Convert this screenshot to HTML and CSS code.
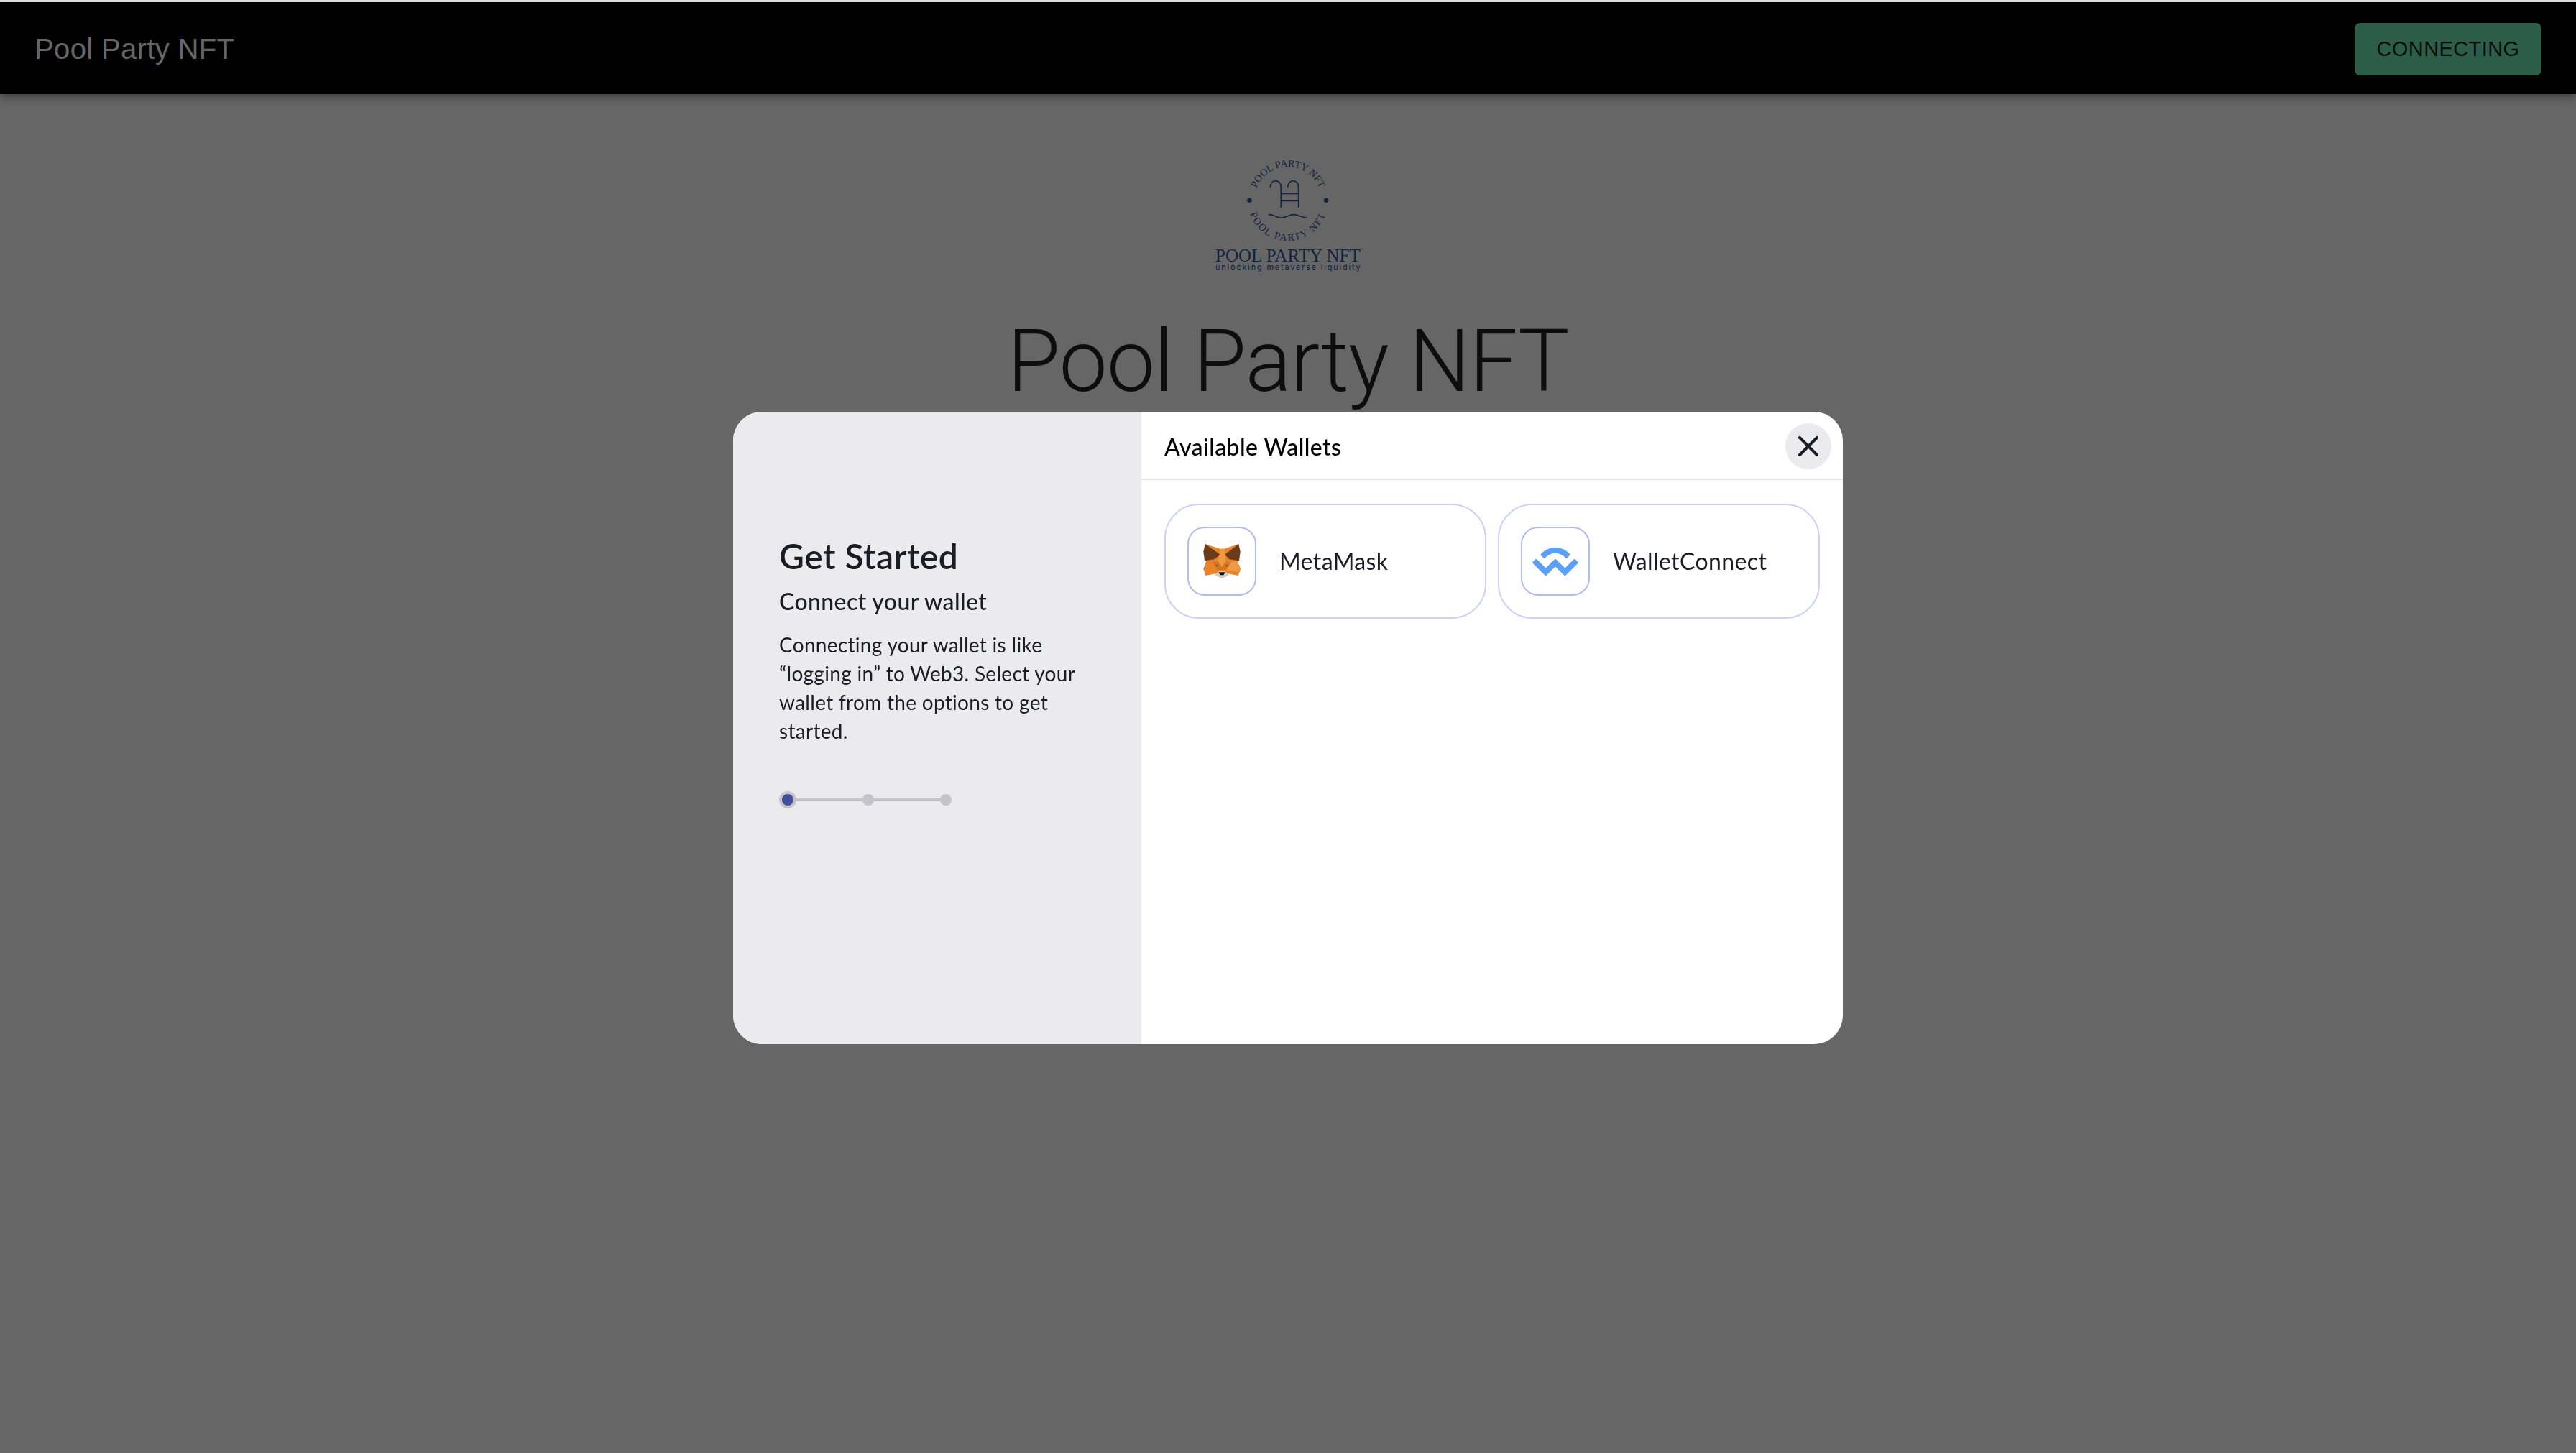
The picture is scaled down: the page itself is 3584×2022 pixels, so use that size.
FILE: index.html
```html
<!DOCTYPE html>
<html lang="en">
<head>
  <meta charset="UTF-8" />
  <meta name="viewport" content="width=device-width, initial-scale=1" />
  <title>Pool Party NFT</title>
  <link rel="stylesheet" href="styles.css">
</head>
<body>

  <header class="navbar">
    <span class="navbar-title">Pool Party NFT</span>
    <button class="connect-btn">CONNECTING</button>
  </header>

  <main class="hero">
    <svg class="logo" viewBox="0 0 304 220" width="304" height="220">
      <defs>
        <path id="arcTop" d="M105 89 A47 47 0 0 1 199 89" />
        <path id="arcBottom" d="M96 89 A56 56 0 0 0 208 89" />
      </defs>
      <text class="logo-arc"><textPath href="#arcTop" startOffset="50%" text-anchor="middle">POOL PARTY NFT</textPath></text>
      <text class="logo-arc logo-arc-wide"><textPath href="#arcBottom" startOffset="50%" text-anchor="middle">POOL PARTY NFT</textPath></text>
      <circle class="logo-dot" cx="98.3" cy="88.7" r="3.2" />
      <circle class="logo-dot" cx="205.3" cy="88.7" r="3.2" />
      <g class="logo-line" transform="scale(0.3333)">
        <path d="M382 212 C382 176 427 176 427 212 V297 M455 212 C455 176 500 176 500 212 V297 M427 238 H500 M427 268 H500" />
        <path d="M375 326 C400 326 410 341 432 339 C452 337 462 325 482 326 C505 327 515 340 537 339" />
      </g>
      <text class="logo-name" x="51" y="173.5" textLength="201.7">POOL PARTY NFT</text>
      <text class="logo-sub" x="51" y="185.5" textLength="201.7">unlocking metaverse liquidity</text>
    </svg>
    <h1 class="hero-title">Pool Party NFT</h1>
  </main>

  <div class="overlay">
    <div class="modal">
      <aside class="sidebar">
        <h2 class="sidebar-title">Get Started</h2>
        <h3 class="sidebar-sub">Connect your wallet</h3>
        <p class="sidebar-text">Connecting your wallet is like “logging in” to Web3. Select your wallet from the options to get started.</p>
        <div class="stepper">
          <span class="step step-active"></span>
          <span class="step-line"></span>
          <span class="step"></span>
          <span class="step-line"></span>
          <span class="step"></span>
        </div>
      </aside>

      <section class="wallets">
        <div class="wallets-head">
          <span class="wallets-title">Available Wallets</span>
          <button class="close-btn" aria-label="Close">
            <svg viewBox="0 0 28 28" width="28" height="28">
              <path d="M2 2 L26 26 M26 2 L2 26" />
            </svg>
          </button>
        </div>
        <div class="wallets-grid">
          <button class="wallet">
            <span class="wallet-icon">
              <svg viewBox="42 42 276 276" width="92" height="92">
                <polygon fill="#e8832a" points="110,108 172,128 190,128 250,108 245,180 258,212 248,240 205,232 180,240 155,232 112,240 103,212 115,180" />
                <polygon fill="#f09a45" points="172,128 190,128 196,182 180,205 165,182" />
                <polygon fill="#e8832a" points="115,180 150,182 165,215 120,225 103,212" />
                <polygon fill="#f09a45" points="245,180 210,182 195,215 240,225 258,212" />
                <polygon fill="#d67420" points="140,182 165,182 180,205 195,182 220,182 200,215 160,215" />
                <polygon fill="#6b3c1a" points="110,108 173,152 148,172 108,178 103,140" />
                <polygon fill="#6b3c1a" points="250,108 192,152 212,172 252,178 257,140" />
                <polygon fill="#d8c8b8" points="150,238 166,222 194,222 210,238 180,252" />
                <polygon fill="#111111" points="166,226 194,226 187,238 173,238" />
                <polygon fill="#3c5a78" points="154,194 167,198 158,202" />
                <polygon fill="#3c5a78" points="206,194 193,198 202,202" />
              </svg>
            </span>
            <span class="wallet-name">MetaMask</span>
          </button>
          <button class="wallet">
            <span class="wallet-icon">
              <svg class="wc-logo" viewBox="34 40 452 276" width="64" height="39">
                <path d="M126.613 93.984C200.137 22.005 319.344 22.005 392.868 93.984L401.717 102.647C405.393 106.246 405.393 112.081 401.717 115.68L371.447 145.316C369.609 147.115 366.629 147.115 364.791 145.316L352.614 133.395C301.323 83.179 218.158 83.179 166.867 133.395L153.826 146.162C151.988 147.961 149.008 147.961 147.17 146.162L116.9 116.526C113.224 112.927 113.224 107.092 116.9 103.493L126.613 93.984ZM455.473 155.276L482.413 181.652C486.089 185.251 486.089 191.086 482.413 194.685L360.937 313.616C357.261 317.215 351.301 317.215 347.625 313.616L261.41 229.204C260.491 228.304 259.001 228.304 258.082 229.204L171.867 313.616C168.191 317.215 162.231 317.215 158.555 313.616L37.078 194.685C33.402 191.086 33.402 185.251 37.078 181.652L64.019 155.276C67.695 151.677 73.655 151.677 77.331 155.276L163.546 239.688C164.465 240.588 165.955 240.588 166.874 239.688L253.089 155.276C256.765 151.677 262.725 151.677 266.401 155.276L352.616 239.688C353.535 240.588 355.025 240.588 355.944 239.688L442.159 155.276C445.835 151.677 451.795 151.677 455.471 155.276Z" />
              </svg>
            </span>
            <span class="wallet-name">WalletConnect</span>
          </button>
        </div>
      </section>
    </div>
  </div>

</body>
</html>
```
FILE: styles.css
```css
body {
  margin: 0;
  height: 2022px;
  overflow: hidden;
  background: #fff;
  font-family: "Liberation Sans", Arial, sans-serif;
  border-top: 3px solid #dcdcdc;
  box-sizing: border-box;
}
.navbar {
  height: 128px;
  padding: 0 48px;
  display: flex;
  align-items: center;
  justify-content: space-between;
  background: #000;
  box-shadow: 0 4px 8px -2px rgba(0, 0, 0, 0.2), 0 8px 10px 0 rgba(0, 0, 0, 0.14), 0 2px 20px 0 rgba(0, 0, 0, 0.12);
}
.navbar-title {
  padding-top: 2px;
  font-size: 40px;
  letter-spacing: 0.35px;
  color: #fff;
}
.connect-btn {
  width: 260px;
  height: 73px;
  margin-top: 3px;
  border: none;
  border-radius: 8px;
  background: #6be8b4;
  color: rgba(0, 0, 0, 0.87);
  font-family: inherit;
  font-size: 29px;
  letter-spacing: 0.4px;
}
.hero {
  display: flex;
  flex-direction: column;
  align-items: center;
  padding-top: 59px;
}
.logo {
  display: block;
}
.logo-arc {
  font-family: "Liberation Serif", serif;
  font-size: 14px;
  fill: #32589e;
}
.logo-arc-wide {
  letter-spacing: 1.8px;
}
.logo-dot {
  fill: #32589e;
}
.logo-line {
  fill: none;
  stroke: #32589e;
  stroke-width: 5;
}
.logo-name {
  font-family: "Liberation Serif", serif;
  font-size: 25px;
  fill: #32589e;
}
.logo-sub {
  font-family: Inter, sans-serif;
  font-size: 11px;
  fill: #32589e;
}
.hero-title {
  margin: 23px 0 0;
  font-family: Roboto, sans-serif;
  font-size: 120px;
  font-weight: 300;
  line-height: 140px;
  letter-spacing: -1px;
  color: rgba(0, 0, 0, 0.87);
  white-space: nowrap;
}
.overlay {
  position: fixed;
  top: 3px;
  left: 0;
  right: 0;
  bottom: 0;
  padding-top: 1px;
  display: flex;
  align-items: center;
  justify-content: center;
  background: rgba(0, 0, 0, 0.6);
}
.modal {
  width: 1544px;
  height: 880px;
  display: flex;
  border-radius: 40px;
  overflow: hidden;
  background: #fff;
  font-family: Lato, sans-serif;
  letter-spacing: 0.4px;
  color: #1a1d26;
}
.sidebar {
  width: 568px;
  box-sizing: border-box;
  padding: 169px 64px 0;
  background: #ebebed;
}
.sidebar-title {
  margin: 0;
  font-size: 48px;
  font-weight: 600;
  line-height: 64px;
  letter-spacing: 0.5px;
}
.sidebar-sub {
  margin: 7px 0 0;
  font-size: 32px;
  font-weight: 500;
  line-height: 48px;
}
.sidebar-text {
  margin: 16px 0 0;
  font-size: 28px;
  line-height: 40px;
  letter-spacing: 0.3px;
}
.stepper {
  margin-top: 64px;
  display: flex;
  align-items: center;
  width: 240px;
}
.step {
  width: 16px;
  height: 16px;
  border-radius: 50%;
  background: #c2c4c9;
}
.step-active {
  box-sizing: content-box;
  border: 4px solid #c2c4c9;
  background: #414ea0;
}
.step-line {
  flex: 1;
  height: 4px;
  background: #c2c4c9;
}
.wallets {
  flex: 1;
}
.wallets-head {
  height: 90px;
  padding: 3px 16px 0 32px;
  display: flex;
  align-items: center;
  justify-content: space-between;
  border-bottom: 2px solid #e5e5e8;
}
.wallets-title {
  font-size: 32px;
  font-weight: 500;
  color: #000;
}
.close-btn {
  width: 64px;
  height: 64px;
  padding: 0;
  display: flex;
  align-items: center;
  justify-content: center;
  border: none;
  border-radius: 50%;
  background: #ebebed;
}
.close-btn path {
  fill: none;
  stroke: #1a1d26;
  stroke-width: 4;
  stroke-linecap: round;
}
.wallets-grid {
  padding: 33px 32px;
  display: grid;
  grid-template-columns: 1fr 1fr;
  gap: 16px;
}
.wallet {
  height: 160px;
  padding: 0 30px;
  display: flex;
  align-items: center;
  gap: 32px;
  border: 2px solid #ccd2f5;
  border-radius: 48px;
  background: #fff;
}
.wallet-icon {
  width: 96px;
  height: 96px;
  box-sizing: border-box;
  display: flex;
  align-items: center;
  justify-content: center;
  border: 2px solid #b4bbef;
  border-radius: 24px;
}
.wc-logo path {
  fill: #5aa0f8;
}
.wallet-name {
  padding-bottom: 2px;
  font-family: Lato, sans-serif;
  font-size: 32px;
  letter-spacing: 0.4px;
  color: #1a1d26;
}
```
